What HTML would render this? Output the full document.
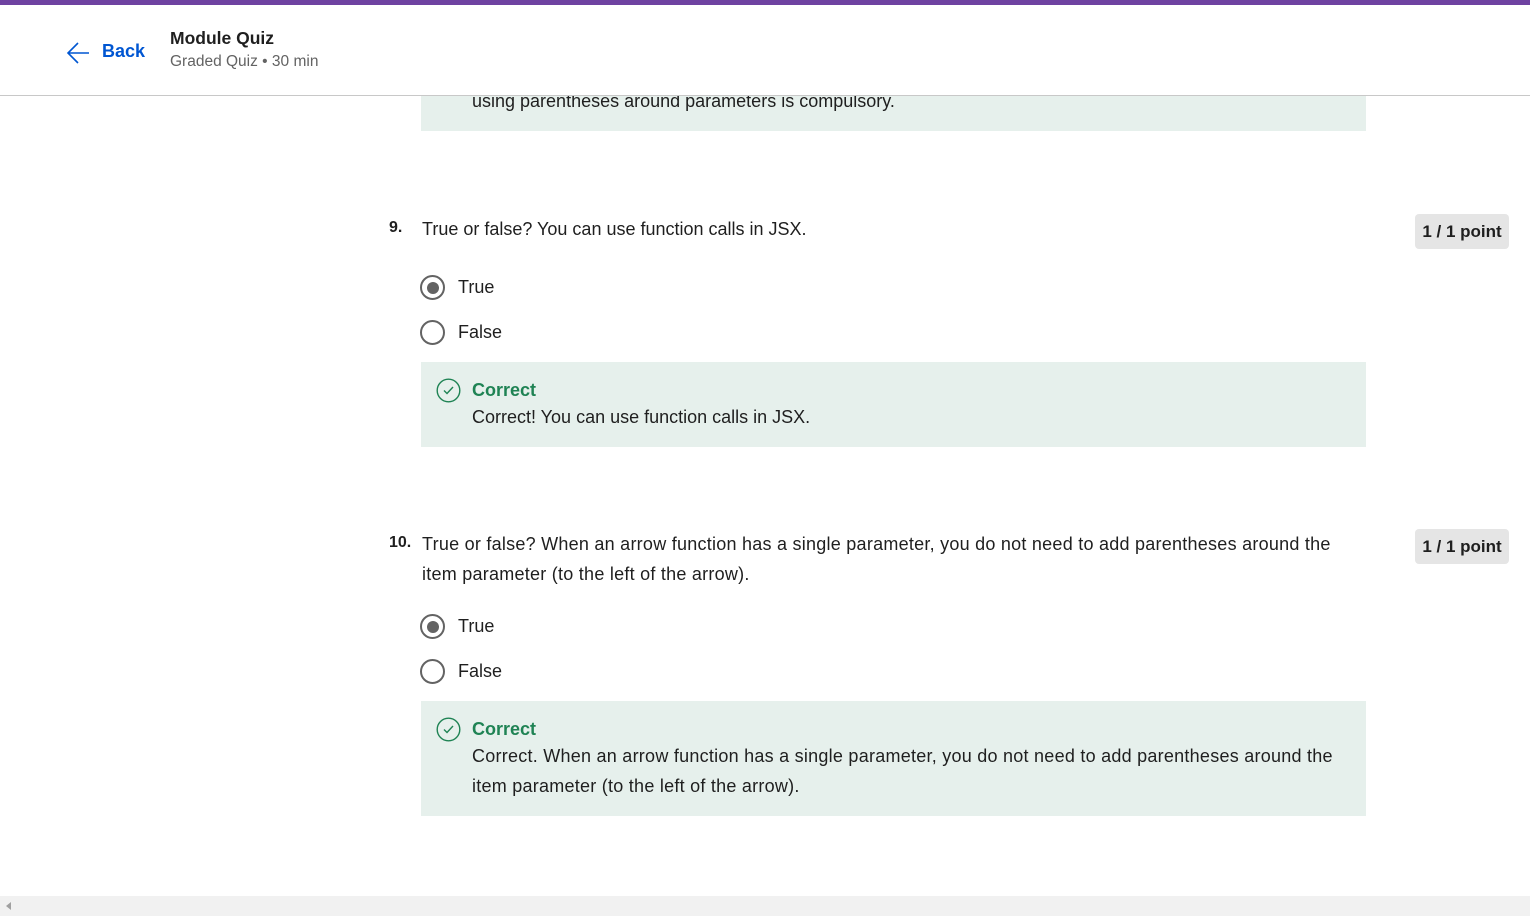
<!DOCTYPE html>
<html><head><meta charset="utf-8"><style>
*{margin:0;padding:0;box-sizing:border-box}
body{width:1530px;height:916px;overflow:hidden;background:#fff;font-family:"Liberation Sans",sans-serif;color:#1f1f1f;position:relative}
.top{position:absolute;left:0;top:0;width:1530px;height:5px;background:#6f42a1}
.hdr{position:absolute;left:0;top:5px;width:1530px;height:91px;border-bottom:1px solid #c8c8c8;background:#fff;z-index:2}
.back{position:absolute;left:66px;top:35px;color:#0056d2;font-size:18px;font-weight:bold}
.back svg{position:absolute;left:0;top:0}
.back span{position:absolute;left:36px;top:1px}
.t1{position:absolute;left:170px;top:23px;font-size:17.5px;font-weight:bold;color:#1f1f1f}
.t2{position:absolute;left:170px;top:48px;font-size:15.5px;color:#636363}
.box{position:absolute;left:421px;width:945px;background:#e6f0ec}
.a{position:absolute;font-size:18px;color:#1f1f1f;white-space:nowrap}
.num{position:absolute;font-size:16px;font-weight:bold}
.pt{position:absolute;left:1415px;width:94px;height:35px;background:#e5e5e5;border-radius:4px;font-size:17px;font-weight:bold;text-align:center;line-height:35px}
.r{position:absolute;left:420px;width:25px;height:25px;border:2px solid #636363;border-radius:50%}
.r.on::after{content:"";position:absolute;left:4.5px;top:4.5px;width:12px;height:12px;border-radius:50%;background:#636363}
.ok{position:absolute;font-size:18px;font-weight:bold;color:#1f8354}
.chk{position:absolute;left:436px}
.sb{position:absolute;left:0;top:896px;width:1530px;height:20px;background:#f1f1f1}
.w{letter-spacing:0.25px}
</style></head><body>
<div class="top"></div>
<div class="hdr">
<div class="back"><svg width="26" height="26" viewBox="0 0 26 26"><path d="M23 13H2M12 3L2 13l10 10" fill="none" stroke="#0056d2" stroke-width="1.6"/></svg><span>Back</span></div>
<div class="t1">Module Quiz</div>
<div class="t2">Graded Quiz • 30 min</div>
</div>
<div class="box" style="top:80px;height:51px"></div>
<div class="a" style="left:472px;top:91px">using parentheses around parameters is compulsory.</div>

<div class="num" style="left:389px;top:219px">9.</div>
<div class="a" style="left:422px;top:219px">True or false? You can use function calls in JSX.</div>
<div class="pt" style="top:214px">1 / 1 point</div>
<div class="r on" style="top:275px"></div><div class="a" style="left:458px;top:277px">True</div>
<div class="r" style="top:320px"></div><div class="a" style="left:458px;top:322px">False</div>
<div class="box" style="top:362px;height:85px"></div>
<svg class="chk" style="top:378px" width="25" height="25" viewBox="0 0 25 25"><circle cx="12.5" cy="12.5" r="11.3" fill="none" stroke="#1f8354" stroke-width="1.4"/><path d="M8 12.5l3 3 6-6.5" fill="none" stroke="#1f8354" stroke-width="1.4"/></svg>
<div class="ok" style="left:472px;top:380px">Correct</div>
<div class="a" style="left:472px;top:407px">Correct! You can use function calls in JSX.</div>

<div class="num" style="left:389px;top:534px">10.</div>
<div class="a w" style="left:422px;line-height:30px;top:529px">True or false? When an arrow function has a single parameter, you do not need to add parentheses around the<br>item parameter (to the left of the arrow).</div>
<div class="pt" style="top:529px">1 / 1 point</div>
<div class="r on" style="top:614px"></div><div class="a" style="left:458px;top:616px">True</div>
<div class="r" style="top:659px"></div><div class="a" style="left:458px;top:661px">False</div>
<div class="box" style="top:701px;height:115px"></div>
<svg class="chk" style="top:717px" width="25" height="25" viewBox="0 0 25 25"><circle cx="12.5" cy="12.5" r="11.3" fill="none" stroke="#1f8354" stroke-width="1.4"/><path d="M8 12.5l3 3 6-6.5" fill="none" stroke="#1f8354" stroke-width="1.4"/></svg>
<div class="ok" style="left:472px;top:719px">Correct</div>
<div class="a w" style="left:472px;top:741px;line-height:30px">Correct. When an arrow function has a single parameter, you do not need to add parentheses around the<br>item parameter (to the left of the arrow).</div>

<div class="sb"><svg style="position:absolute;left:6px;top:6px" width="6" height="8"><path d="M5 0L0 4l5 4z" fill="#a0a0a0"/></svg></div>
</body></html>
